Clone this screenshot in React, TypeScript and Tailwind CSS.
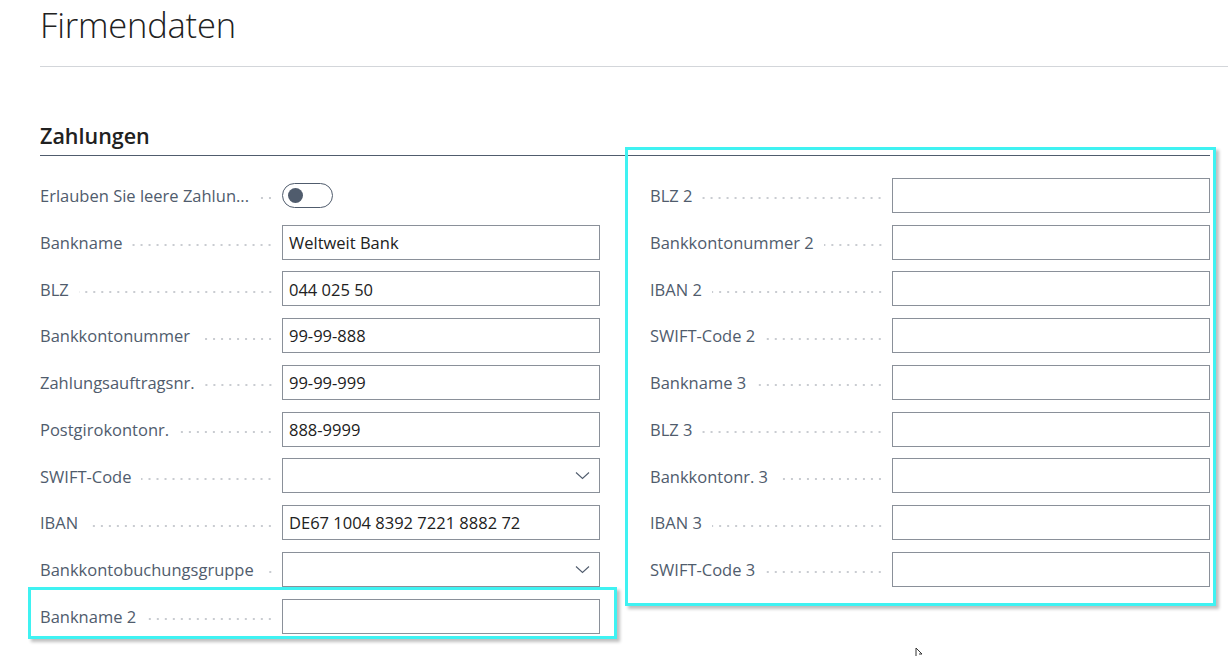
type Field = {
  label: string;
  value?: string;
  kind?: "text" | "select" | "toggle";
};

const LEFT: Field[] = [
  { label: "Erlauben Sie leere Zahlun...", kind: "toggle" },
  { label: "Bankname", value: "Weltweit Bank" },
  { label: "BLZ", value: "044 025 50" },
  { label: "Bankkontonummer", value: "99-99-888" },
  { label: "Zahlungsauftragsnr.", value: "99-99-999" },
  { label: "Postgirokontonr.", value: "888-9999" },
  { label: "SWIFT-Code", kind: "select" },
  { label: "IBAN", value: "DE67 1004 8392 7221 8882 72" },
  { label: "Bankkontobuchungsgruppe", kind: "select" },
  { label: "Bankname 2" },
];

const RIGHT: Field[] = [
  { label: "BLZ 2" },
  { label: "Bankkontonummer 2" },
  { label: "IBAN 2" },
  { label: "SWIFT-Code 2" },
  { label: "Bankname 3" },
  { label: "BLZ 3" },
  { label: "Bankkontonr. 3" },
  { label: "IBAN 3" },
  { label: "SWIFT-Code 3" },
];

const Chevron = () => (
  <svg width="15" height="9" viewBox="0 0 15 9" fill="none" className="mr-[3px]">
    <path d="M1 1.5 L7.5 7.5 L14 1.5" stroke="#505c6d" strokeWidth="1.1" />
  </svg>
);

const Toggle = () => (
  <div className="flex h-[25px] w-[51px] items-center rounded-full border border-[#505c6d] bg-white pl-[5px]">
    <div className="h-[15px] w-[15px] rounded-full bg-[#505c6d]" />
  </div>
);

function FieldRow({ field }: { field: Field }) {
  const kind = field.kind ?? "text";
  return (
    <div className="flex h-[46.75px] items-center">
      <div className="flex w-[242px] translate-y-[1px] items-center pr-[8px]">
        <span className="whitespace-nowrap text-[#505c6d]">{field.label}</span>
        <div className="ml-[10px] h-[4px] flex-1 translate-y-[2px] bg-[radial-gradient(circle,#c9ccd1_0.9px,transparent_1.2px)] bg-[length:8px_4px] bg-repeat-x bg-right" />
      </div>
      {kind === "toggle" ? (
        <Toggle />
      ) : (
        <div className="flex h-[35px] w-[318px] items-center border border-[#8a9099] bg-white px-[6px] text-[#212121]">
          <span className="flex-1 translate-y-[1px]">{field.value ?? ""}</span>
          {kind === "select" && <Chevron />}
        </div>
      )}
    </div>
  );
}

export default function App() {
  return (
    <div className="relative min-h-[657px] w-[1228px] overflow-hidden bg-white font-['Open_Sans',sans-serif] text-[16.5px]">
      {/* Page header */}
      <div className="pl-[40px]">
        <h1 className="h-[66px] pt-[1px] text-[34.5px] font-light leading-[48px] tracking-[-0.2px] text-[#212121]">
          Firmendaten
        </h1>
        <div className="h-px bg-[#d3d6da]" />
      </div>

      {/* Zahlungen */}
      <div className="pt-[53px] pl-[40px] pr-[18px]">
        <h2 className="h-[35px] text-[21.5px] font-semibold leading-[32px] text-[#212121]">
          Zahlungen
        </h2>
        <div className="h-px bg-[#505c6d]" />

        <div className="mt-[16px] grid grid-cols-[560px_560px] gap-x-[50px]">
          <div className="flex flex-col">
            {LEFT.map((f) => (
              <FieldRow key={f.label} field={f} />
            ))}
          </div>
          <div className="flex flex-col">
            {RIGHT.map((f) => (
              <FieldRow key={f.label} field={f} />
            ))}
          </div>
        </div>
      </div>

      {/* Highlight overlays */}
      <div className="pointer-events-none absolute left-[625px] top-[147px] h-[459px] w-[591px] border-[3px] border-[#3ff2f2] shadow-[3px_3px_3px_rgba(0,0,0,0.25)]" />
      <div className="pointer-events-none absolute left-[28px] top-[587px] h-[52px] w-[589px] border-[3px] border-[#3ff2f2] shadow-[3px_3px_3px_rgba(0,0,0,0.25)]" />

      {/* Mouse cursor */}
      <svg className="absolute left-[915px] top-[647px]" width="10" height="12" viewBox="0 0 10 12">
        <path d="M1 1 L1 9 M1 1 L7 7 L4 7" fill="none" stroke="#333" strokeWidth="1" />
      </svg>
    </div>
  );
}
